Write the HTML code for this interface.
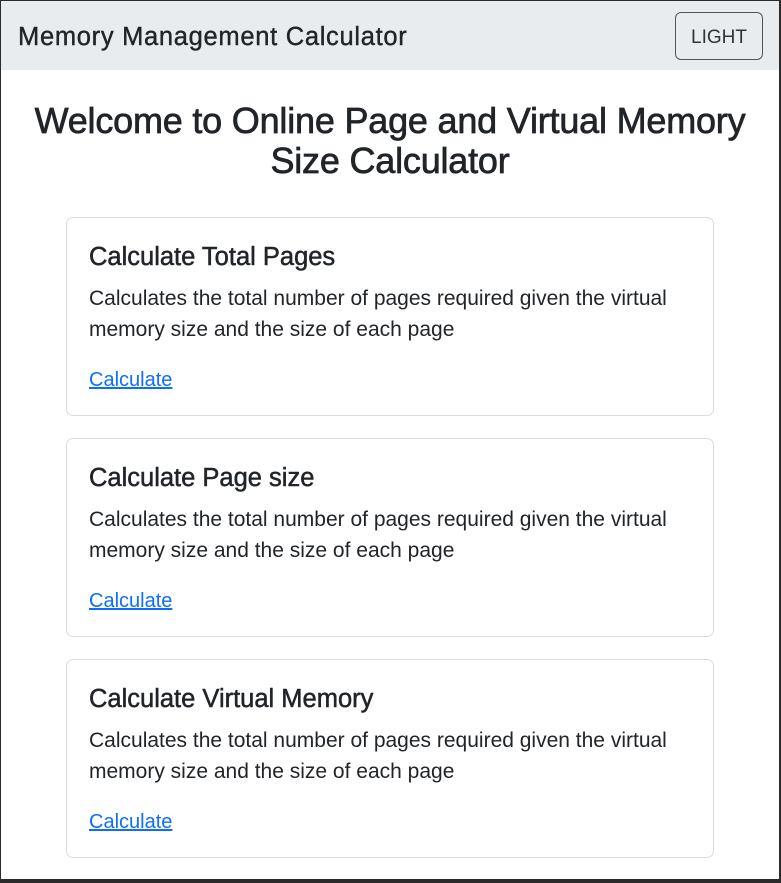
<!DOCTYPE html>
<html><head><meta charset="utf-8"><style>
html,body{margin:0;padding:0}
body{width:781px;height:883px;background:#2b2b2b;font-family:"Liberation Sans",sans-serif;color:#212529;overflow:hidden}
.page{position:absolute;left:1px;top:1px;width:778px;height:878px;background:#fff}
.nav{height:69px;background:#e9ecef;position:relative}
.brand{position:absolute;left:17px;top:22px;font-size:25.5px;letter-spacing:0.7px;-webkit-text-stroke:0.4px #212529}
.btn{position:absolute;left:674px;top:11px;width:88px;height:48px;border:1px solid #555;border-radius:6px;box-sizing:border-box;font-size:19px;text-align:center;line-height:50px;color:#333}
h1{margin:0;position:absolute;left:0;width:778px;top:100px;text-align:center;font-size:36px;font-weight:normal;line-height:40px;letter-spacing:-0.2px;-webkit-text-stroke:0.7px #212529}
.card{position:absolute;left:65px;width:648px;height:199px;border:1px solid #dcdcdc;border-radius:7px;box-sizing:border-box}
.card h2{position:absolute;left:22px;top:25px;margin:0;font-size:25.5px;font-weight:normal;letter-spacing:0;-webkit-text-stroke:0.5px #212529}
.card p{position:absolute;left:22px;top:65px;margin:0;font-size:21px;line-height:31px;width:610px;letter-spacing:0}
.card a{position:absolute;left:22px;top:151px;font-size:20px;color:#0d6efd;text-decoration:underline}
</style></head><body><div class="page">
<div class="nav"><div class="brand">Memory Management Calculator</div><div class="btn">LIGHT</div></div>
<h1>Welcome to Online Page and Virtual Memory<br>Size Calculator</h1>
<div class="card" style="top:216px"><h2>Calculate Total Pages</h2><p>Calculates the total number of pages required given the virtual memory size and the size of each page</p><a>Calculate</a></div>
<div class="card" style="top:437px"><h2>Calculate Page size</h2><p>Calculates the total number of pages required given the virtual memory size and the size of each page</p><a>Calculate</a></div>
<div class="card" style="top:658px"><h2>Calculate Virtual Memory</h2><p>Calculates the total number of pages required given the virtual memory size and the size of each page</p><a>Calculate</a></div>
</div></body></html>
